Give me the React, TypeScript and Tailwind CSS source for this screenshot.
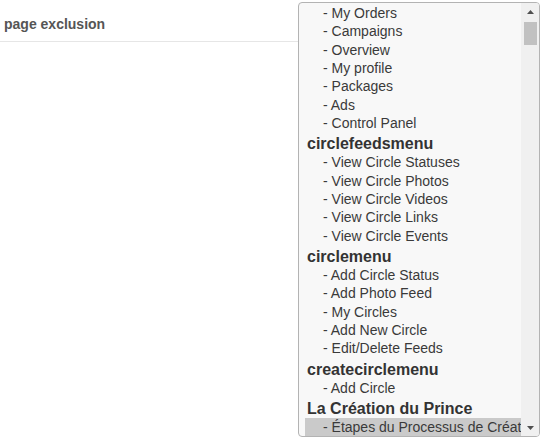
import React from "react";

type Row = { kind: "group" | "option"; label: string; selected?: boolean };

const rows: Row[] = [
  { kind: "option", label: "My Orders" },
  { kind: "option", label: "Campaigns" },
  { kind: "option", label: "Overview" },
  { kind: "option", label: "My profile" },
  { kind: "option", label: "Packages" },
  { kind: "option", label: "Ads" },
  { kind: "option", label: "Control Panel" },
  { kind: "group", label: "circlefeedsmenu" },
  { kind: "option", label: "View Circle Statuses" },
  { kind: "option", label: "View Circle Photos" },
  { kind: "option", label: "View Circle Videos" },
  { kind: "option", label: "View Circle Links" },
  { kind: "option", label: "View Circle Events" },
  { kind: "group", label: "circlemenu" },
  { kind: "option", label: "Add Circle Status" },
  { kind: "option", label: "Add Photo Feed" },
  { kind: "option", label: "My Circles" },
  { kind: "option", label: "Add New Circle" },
  { kind: "option", label: "Edit/Delete Feeds" },
  { kind: "group", label: "createcirclemenu" },
  { kind: "option", label: "Add Circle" },
  { kind: "group", label: "La Création du Prince" },
  { kind: "option", label: "Étapes du Processus de Création", selected: true },
];

function ListRow({ row }: { row: Row }) {
  if (row.kind === "group") {
    return (
      <div className="h-[21px] pl-[2px] flex items-end whitespace-nowrap overflow-hidden">
        <span className="text-[16px] leading-[18px] font-bold text-[#333]">{row.label}</span>
      </div>
    );
  }
  return (
    <div
      className={`h-[18.33px] pl-[18px] flex items-center whitespace-nowrap overflow-hidden ${
        row.selected ? "bg-[#cacaca]" : ""
      }`}
    >
      <span className="text-[14px] leading-[18px] text-[#3a3a3a]">- {row.label}</span>
    </div>
  );
}

export default function App() {
  return (
    <div
      className="w-[554px] h-[448px] bg-white flex items-start"
      style={{ fontFamily: '"Liberation Sans", Arial, sans-serif' }}
    >
      <div className="w-[298px] h-[42px] border-b border-[#e6e6e6] pl-[4px] pt-[16px]">
        <span className="block text-[14px] leading-[16px] font-bold text-[#555]">page exclusion</span>
      </div>

      <div className="mt-[2px] w-[242px] h-[435px] border border-[#b3b3b3] rounded-[4px] bg-[#f8f8f8] overflow-hidden flex">
        <div className="flex-1 min-w-0 pl-[6px] pt-[1px] overflow-hidden">
          {rows.map((row, i) => (
            <ListRow key={i} row={row} />
          ))}
        </div>

        <div className="w-[18px] bg-[#f0f0f0] flex flex-col items-center">
          <div className="h-[17px] w-full flex items-center justify-center">
            <svg width="7" height="4" viewBox="0 0 7 4">
              <path d="M0 4 L3.5 0 L7 4 Z" fill="#505050" />
            </svg>
          </div>
          <div className="mt-[2px] w-[13px] h-[23px] bg-[#c1c1c1]" />
          <div className="flex-1" />
          <div className="h-[17px] w-full flex items-center justify-center">
            <svg width="7" height="4" viewBox="0 0 7 4">
              <path d="M0 0 L3.5 4 L7 0 Z" fill="#505050" />
            </svg>
          </div>
        </div>
      </div>
    </div>
  );
}
